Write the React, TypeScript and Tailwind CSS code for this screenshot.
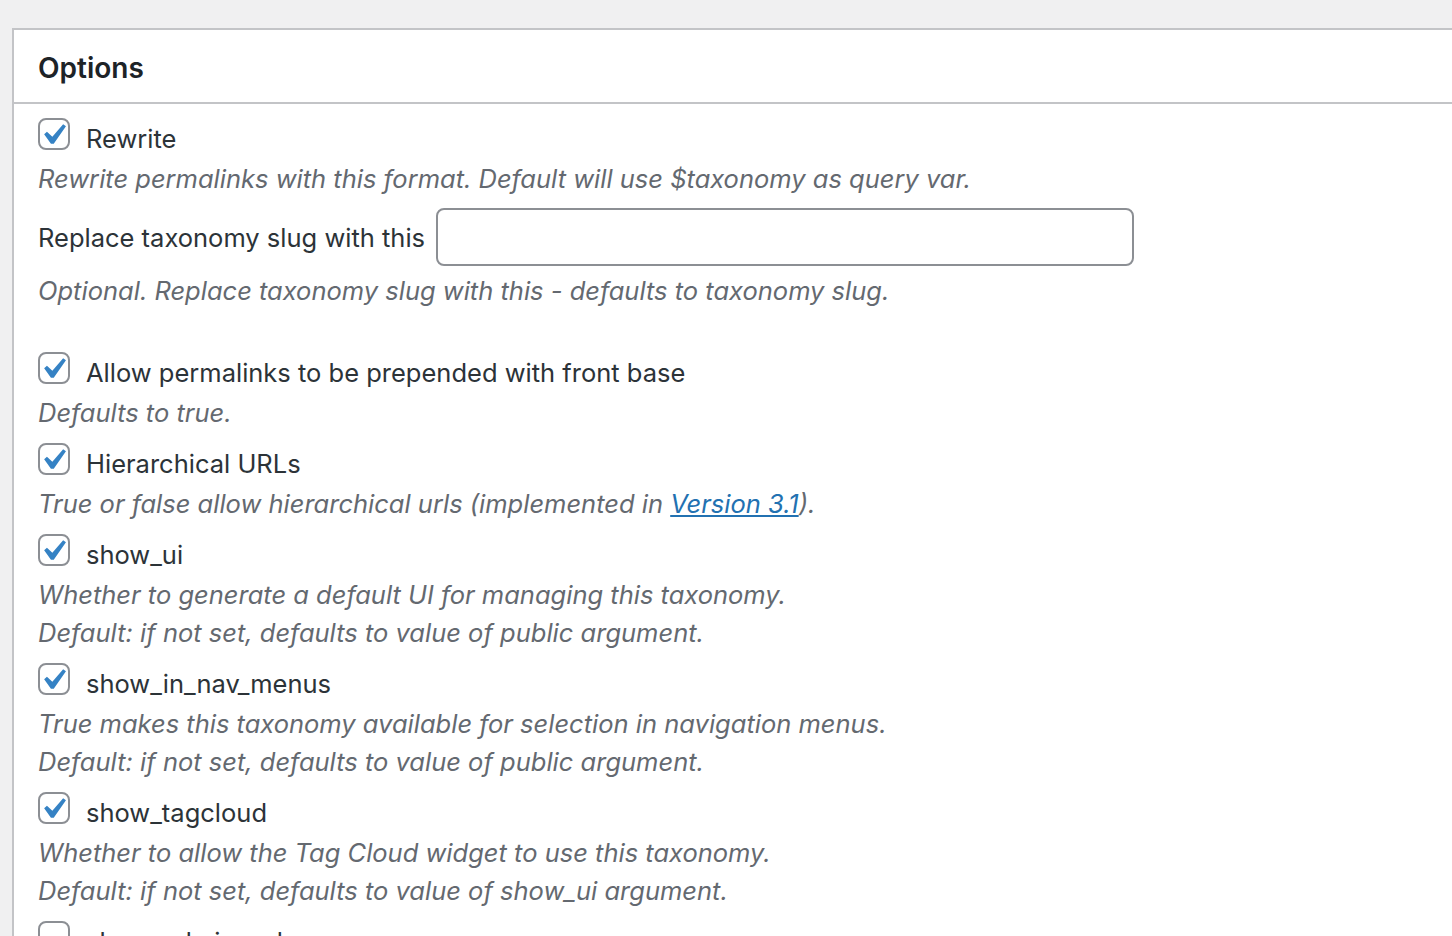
import type { ReactNode } from 'react';

type Option = {
    label: string;
    checked: boolean;
    desc: ReactNode[];
};

const options: Option[] = [
    {
        label: 'Allow permalinks to be prepended with front base',
        checked: true,
        desc: ['Defaults to true.'],
    },
    {
        label: 'Hierarchical URLs',
        checked: true,
        desc: [
            <>
                True or false allow hierarchical urls (implemented in{' '}
                <a href="#" className="text-[#2271b1] underline">Version 3.1</a>).
            </>,
        ],
    },
    {
        label: 'show_ui',
        checked: true,
        desc: [
            'Whether to generate a default UI for managing this taxonomy.',
            'Default: if not set, defaults to value of public argument.',
        ],
    },
    {
        label: 'show_in_nav_menus',
        checked: true,
        desc: [
            'True makes this taxonomy available for selection in navigation menus.',
            'Default: if not set, defaults to value of public argument.',
        ],
    },
    {
        label: 'show_tagcloud',
        checked: true,
        desc: [
            'Whether to allow the Tag Cloud widget to use this taxonomy.',
            'Default: if not set, defaults to value of show_ui argument.',
        ],
    },
    {
        label: 'show_admin_column',
        checked: false,
        desc: ['Whether to allow automatic creation of taxonomy columns on associated post-types.'],
    },
];

function Checkbox({ checked }: { checked: boolean }) {
    return (
        <span className="relative mt-[1px] block h-[32px] w-[32px] shrink-0 rounded-[8px] border-2 border-[#8c8f94] bg-white">
            {checked && (
                <svg viewBox="0 0 20 20" className="absolute left-[-8px] top-[-6px] h-[42px] w-[42px]">
                    <path fill="#3582c4" d="M14.83 4.89l1.34.94-5.81 8.38H9.02L5.78 9.67l1.34-1.25 2.57 2.4z" />
                </svg>
            )}
        </span>
    );
}

function CheckRow({ label, checked }: { label: string; checked: boolean }) {
    return (
        <label className="flex h-[42px] items-start gap-[16px]">
            <Checkbox checked={checked} />
            <span className="pt-[1px] text-[25.5px] leading-[41px] text-[#2c3338]">{label}</span>
        </label>
    );
}

function Desc({ children }: { children: ReactNode }) {
    return <p className="h-[38px] pt-[2px] text-[25.5px] italic leading-[36px] text-[#646970]">{children}</p>;
}

export default function App() {
    return (
        <div className="h-[936px] overflow-hidden bg-[#f0f0f1] pl-[12px] pt-[28px] font-['Inter',sans-serif]">
            <div className="min-h-[908px] border-l-2 border-t-2 border-[#c3c4c7] bg-white">
                <div className="flex h-[74px] items-center border-b-2 border-[#c3c4c7] px-[24px] pt-[4px]">
                    <h2 className="text-[28px] font-semibold text-[#1d2327]">Options</h2>
                </div>

                <div className="px-[24px] pt-[13px]">
                    <CheckRow label="Rewrite" checked />
                    <Desc>Rewrite permalinks with this format. Default will use $taxonomy as query var.</Desc>

                    <div className="mt-[11px] flex h-[58px] items-center gap-[11px]">
                        <span className="pt-[2px] text-[25.5px] text-[#2c3338]">Replace taxonomy slug with this</span>
                        <input
                            type="text"
                            className="h-[58px] w-[698px] rounded-[8px] border-2 border-[#8c8f94] bg-white px-[16px] text-[26px] outline-none"
                        />
                    </div>
                    <div className="mt-[5px]">
                        <Desc>Optional. Replace taxonomy slug with this - defaults to taxonomy slug.</Desc>
                    </div>

                    <div className="mt-[42px] flex flex-col gap-[11px]">
                        {options.map((o) => (
                            <div key={o.label}>
                                <CheckRow label={o.label} checked={o.checked} />
                                {o.desc.map((d, i) => (
                                    <Desc key={i}>{d}</Desc>
                                ))}
                            </div>
                        ))}
                    </div>
                </div>
            </div>
        </div>
    );
}
